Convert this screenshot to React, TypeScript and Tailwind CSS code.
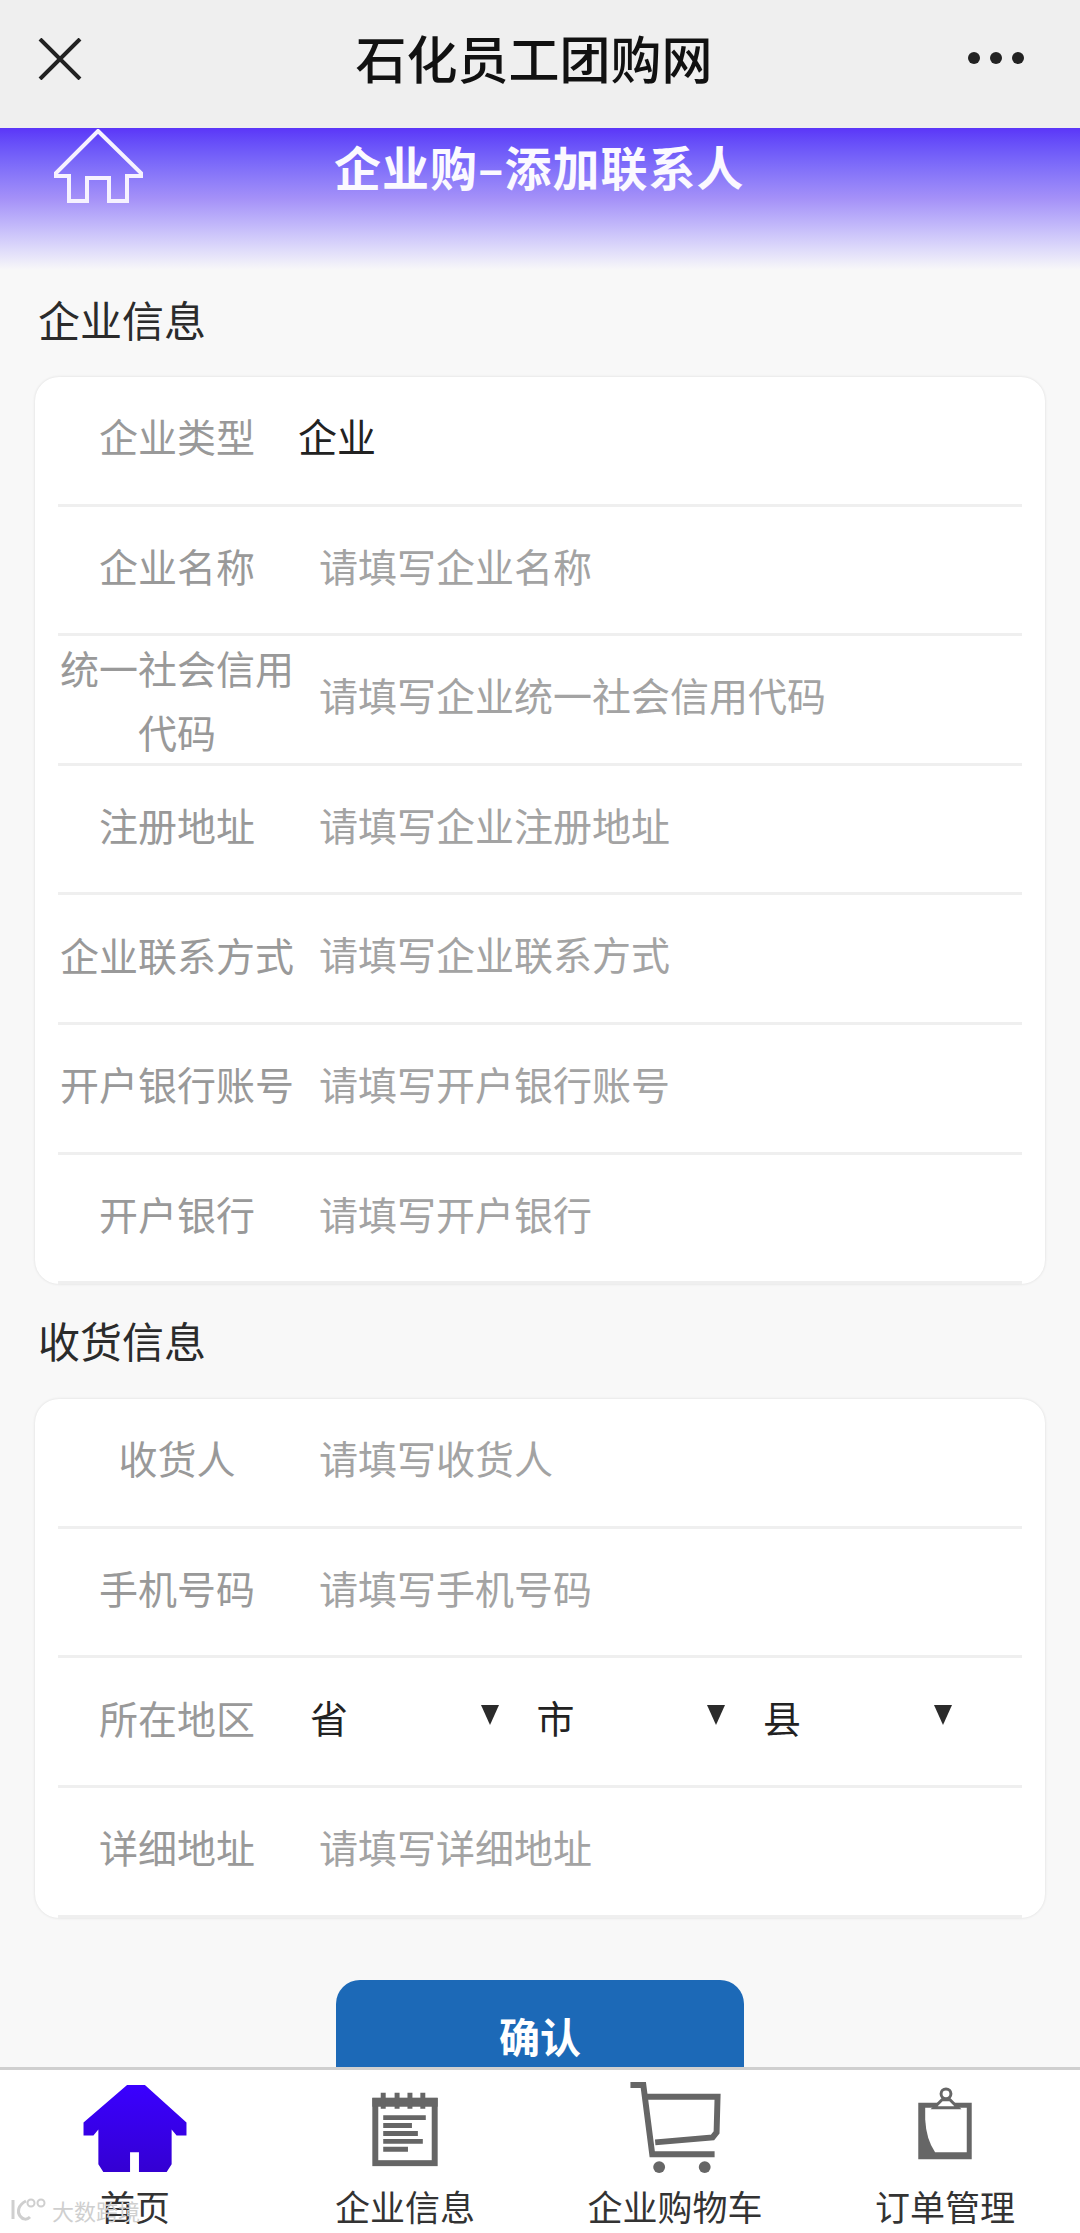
const companyRows = [
  { label: "企业类型", value: "企业", filled: true },
  { label: "企业名称", value: "请填写企业名称" },
  { label: "统一社会信用代码", value: "请填写企业统一社会信用代码" },
  { label: "注册地址", value: "请填写企业注册地址" },
  { label: "企业联系方式", value: "请填写企业联系方式" },
  { label: "开户银行账号", value: "请填写开户银行账号" },
  { label: "开户银行", value: "请填写开户银行" },
];

const receiverRows = [
  { label: "收货人", value: "请填写收货人" },
  { label: "手机号码", value: "请填写手机号码" },
  { label: "所在地区", region: ["省", "市", "县"] },
  { label: "详细地址", value: "请填写详细地址" },
];

type RowData = { label: string; value?: string; filled?: boolean; region?: string[] };

const Row = ({ row }: { row: RowData }) => (
  <div className="mx-[23px] flex h-[129.6px] items-center border-b-[3px] border-[#efefef] pb-[10px]">
    {/* 两行的标签要比单行的低一点 */}
    <div className={`w-[238px] shrink-0 text-center text-[39px] leading-[64px] text-[#999] ${row.label.length > 6 ? "mt-[10px]" : ""}`}>
      {row.label}
    </div>
    {row.region ? (
      <div className="flex flex-1 pl-[14px] text-[#222]">
        {row.region.map((r) => (
          <div key={r} className="flex w-[226.5px] shrink-0 items-center pr-[38px]">
            <span className="flex-1 text-[38px]">{r}</span>
            <svg width="18" height="20" viewBox="0 0 18 20" className="mb-[4px]">
              <path d="M0 0h18L9 20z" fill="#2b2b2b" />
            </svg>
          </div>
        ))}
      </div>
    ) : (
      <div className={`text-[39px] ${row.filled ? "pl-[2px] text-[#222]" : "pl-[23px] text-[#a3a3a3]"}`}>{row.value}</div>
    )}
  </div>
);

const Card = ({ rows }: { rows: RowData[] }) => (
  <div className="mx-[35px] rounded-[24px] bg-white shadow-[0_0_3px_rgba(0,0,0,0.12)]">
    {rows.map((row) => (
      <Row key={row.label} row={row} />
    ))}
  </div>
);

const tabs = [
  { label: "首页", active: true },
  { label: "企业信息" },
  { label: "企业购物车" },
  { label: "订单管理" },
];

const HomeIcon = () => (
  <svg width="110" height="100" viewBox="0 0 110 100">
    <defs>
      <linearGradient id="homeFill" x1="0" y1="0" x2="0" y2="1">
        <stop offset="0" stopColor="#3a00ff" />
        <stop offset="1" stopColor="#3400d2" />
      </linearGradient>
    </defs>
    <path
      d="M47 5h18l42 38v13H97l-5-6v35l-5 8H59V73H50v20H23l-5-8V50l-5 6H3V43z"
      fill="url(#homeFill)"
    />
  </svg>
);

const NotebookIcon = () => (
  <svg width="110" height="100" viewBox="0 0 110 100" fill="none" stroke="#666">
    <rect x="25" y="21" width="60" height="63" strokeWidth="6" />
    <rect x="22" y="18" width="66" height="9" fill="#666" stroke="none" />
    <path d="M33 13v16M47 13v16M60 13v16M73 13v16" strokeWidth="5" />
    <path d="M33 38h43M33 46h29M33 54h35M33 62h40M33 70h25" strokeWidth="5" />
  </svg>
);

const CartIcon = () => (
  <svg width="110" height="100" viewBox="0 0 110 100" fill="none" stroke="#666" strokeWidth="6">
    <path d="M10 5h13l9 70h63" />
    <path d="M24 17h74l-1 36-4 5-58 5" />
    <circle cx="39" cy="88" r="6" fill="#666" stroke="none" />
    <circle cx="85" cy="88" r="6" fill="#666" stroke="none" />
  </svg>
);

const ClipboardIcon = () => (
  <svg width="110" height="100" viewBox="0 0 110 100">
    <path d="M28 23h54v57H28z" fill="#666" />
    <path d="M35 28h42v45H45Q36 60 35 40z" fill="#fff" />
    <circle cx="56" cy="14" r="5" fill="#fff" stroke="#666" strokeWidth="3" />
    <path d="M44 28l8-8h8l8 8z" fill="#fff" stroke="#666" strokeWidth="3" />
  </svg>
);

const tabIcons = [HomeIcon, NotebookIcon, CartIcon, ClipboardIcon];

export default function App() {
  return (
    <div className="relative flex h-[2233px] w-[1080px] flex-col overflow-hidden bg-[#f8f8f8] font-['Noto_Sans_CJK_SC','Noto_Sans',sans-serif]">
      <header className="flex h-[128px] shrink-0 items-center justify-between bg-[#efefef] pl-[38px] pr-[56px]">
        <svg width="44" height="42" viewBox="0 0 44 42" className="mb-[10px]">
          <path d="M2 1l40 40M42 1L2 41" stroke="#222" strokeWidth="4" />
        </svg>
        <div className="mb-[14px] ml-[18px] text-[51px] font-medium text-[#111]">石化员工团购网</div>
        <div className="mb-[12px] flex gap-[10px]">
          <span className="size-[12px] rounded-full bg-[#222]" />
          <span className="size-[12px] rounded-full bg-[#222]" />
          <span className="size-[12px] rounded-full bg-[#222]" />
        </div>
      </header>
      <main className="min-h-0 flex-1 overflow-hidden">
        <div className="flex h-[142px] items-start bg-gradient-to-b from-[#5b35f8] via-[#a591f8] to-[#f8f8f8] pl-[54px]">
          <svg width="90" height="76" viewBox="0 0 90 76" className="mt-[1px] shrink-0">
            <path d="M44 2l43 42v3H73v25H55V49H33v23H15V47H2v-3z" fill="none" stroke="#f6f2ff" strokeWidth="4" />
          </svg>
          <div className="ml-[190px] pt-[3px] text-[47px] font-bold leading-[70px] tracking-[1px] whitespace-nowrap text-[#fbf9ff]">企业购–添加联系人</div>
        </div>
        <div className="flex h-[107px] items-center pb-[10px] pl-[38px] text-[42px] text-[#2b2b2b]">企业信息</div>
        <Card rows={companyRows} />
        <div className="flex h-[115px] items-center pb-[4px] pl-[38px] text-[42px] text-[#2b2b2b]">收货信息</div>
        <Card rows={receiverRows} />
        <div className="mx-auto mt-[62px] flex h-[120px] w-[408px] justify-center rounded-[24px] bg-[#1c69b7] pt-[25px] text-[41px] leading-[60px] font-bold text-white">
          确认
        </div>
      </main>
      <nav className="flex h-[166px] shrink-0 border-t-[3px] border-[#cfcfcf] bg-white">
        {tabs.map((t, i) => {
          const Icon = tabIcons[i];
          return (
            <div key={t.label} className="flex flex-1 flex-col items-center pt-[10px] text-[35px] leading-[54px] text-[#333]">
              <Icon />
              <span>{t.label}</span>
            </div>
          );
        })}
      </nav>
      {/* 水印 */}
      <div className="absolute bottom-[10px] left-[10px] flex items-center gap-[2px] text-[22px] leading-[26px] text-[#cfcfcf]">
        <svg width="40" height="24" viewBox="0 0 40 24" fill="none" stroke="#cfcfcf" strokeWidth="3">
          <path d="M3 2v19M16 3C8 7 7 14 10 18s7 4 10 1" />
          <circle cx="21" cy="5" r="3.5" strokeWidth="2" />
          <circle cx="31" cy="5" r="3.5" strokeWidth="2" />
        </svg>
        <span>大数跨境</span>
      </div>
    </div>
  );
}
